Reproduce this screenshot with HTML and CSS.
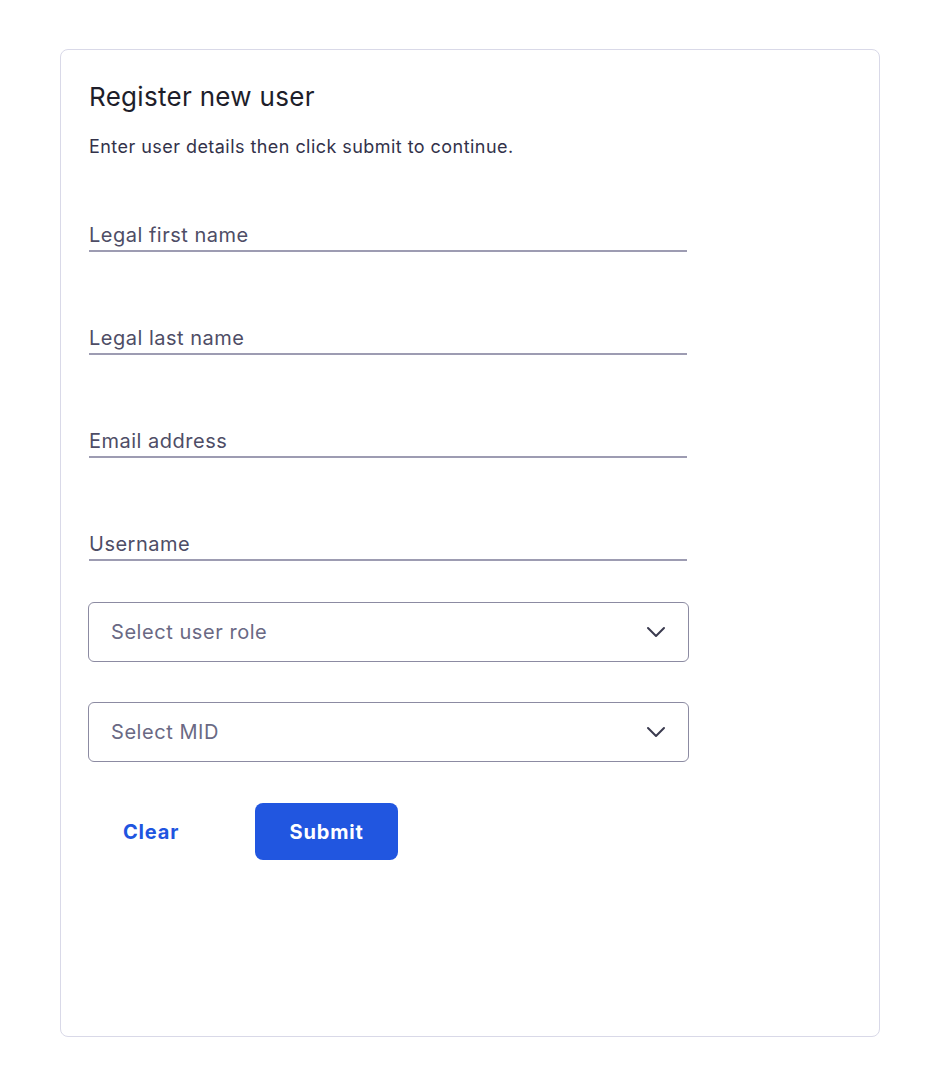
FILE: index.html
```html
<!DOCTYPE html>
<html lang="en">
<head>
    <meta charset="UTF-8">
    <meta name="viewport" content="width=device-width, initial-scale=1.0">
    <title>Register new user</title>
    <link rel="stylesheet" href="styles.css">
</head>
<body>
    <main class="card">
        <h1 class="title">Register new user</h1>
        <p class="subtitle">Enter user details then click submit to continue.</p>

        <form class="form" onsubmit="return false;">
            <label class="field">
                <input type="text" placeholder="Legal first name">
            </label>
            <label class="field">
                <input type="text" placeholder="Legal last name">
            </label>
            <label class="field">
                <input type="email" placeholder="Email address">
            </label>
            <label class="field">
                <input type="text" placeholder="Username">
            </label>

            <div class="select select-first">
                <span>Select user role</span>
                <svg width="20" height="12" viewBox="0 0 20 12"><path d="M2 2 L10 10 L18 2" fill="none" stroke="#3a3a4e" stroke-width="2" stroke-linecap="round" stroke-linejoin="round"/></svg>
            </div>
            <div class="select">
                <span>Select MID</span>
                <svg width="20" height="12" viewBox="0 0 20 12"><path d="M2 2 L10 10 L18 2" fill="none" stroke="#3a3a4e" stroke-width="2" stroke-linecap="round" stroke-linejoin="round"/></svg>
            </div>

            <div class="actions">
                <button type="button" class="btn btn-clear">Clear</button>
                <button type="submit" class="btn btn-submit">Submit</button>
            </div>
        </form>
    </main>
</body>
</html>
```

FILE: styles.css
```css
body {
    margin: 0;
    background-color: #fff;
    font-family: "Inter", "Liberation Sans", sans-serif;
    padding: 49px 64px 49px 60px;
}
.card {
    border: 1px solid #d9d9e8;
    border-radius: 8px;
    height: 988px;
    box-sizing: border-box;
    padding: 24px 28px;
}
.title {
    margin: 0;
    font-size: 26px;
    font-weight: 400;
    color: #1e1e2a;
    line-height: 46px;
    letter-spacing: 0.3px;
}
.subtitle {
    margin: 14px 0 0;
    font-size: 18px;
    color: #33324a;
    line-height: 26px;
    letter-spacing: 0.45px;
}
.form {
    width: 601px;
    margin: 61px 0 0 -1px;
}
.field {
    display: block;
    width: 598px;
    margin: 0 0 72px 1px;
}
.field input {
    display: block;
    width: 100%;
    border: none;
    border-bottom: 2px solid #9d9cb2;
    padding: 0 0 1px;
    font-family: inherit;
    font-size: 20px;
    letter-spacing: 0.5px;
    line-height: 28px;
    outline: none;
    background: transparent;
}
.field input::placeholder {
    color: #4e4d66;
}
.select {
    display: flex;
    justify-content: space-between;
    align-items: center;
    height: 60px;
    box-sizing: border-box;
    border: 1px solid #8c8ba2;
    border-radius: 6px;
    padding: 0 22px 0 22px;
    font-size: 20px;
    letter-spacing: 0.55px;
    color: #6a6984;
    margin-bottom: 40px;
}
.select-first {
    margin-top: -31px;
}
.actions {
    display: flex;
    align-items: center;
    gap: 76px;
    margin-top: 41px;
}
.btn {
    font-family: inherit;
    font-size: 20px;
    font-weight: 700;
    letter-spacing: 0.8px;
    border: none;
    cursor: pointer;
}
.btn-clear {
    background: transparent;
    color: #1f55e0;
    padding: 0 0 0 35px;
}
.btn-submit {
    background: #2156e0;
    color: #fff;
    width: 143px;
    height: 57px;
    border-radius: 8px;
}
```
